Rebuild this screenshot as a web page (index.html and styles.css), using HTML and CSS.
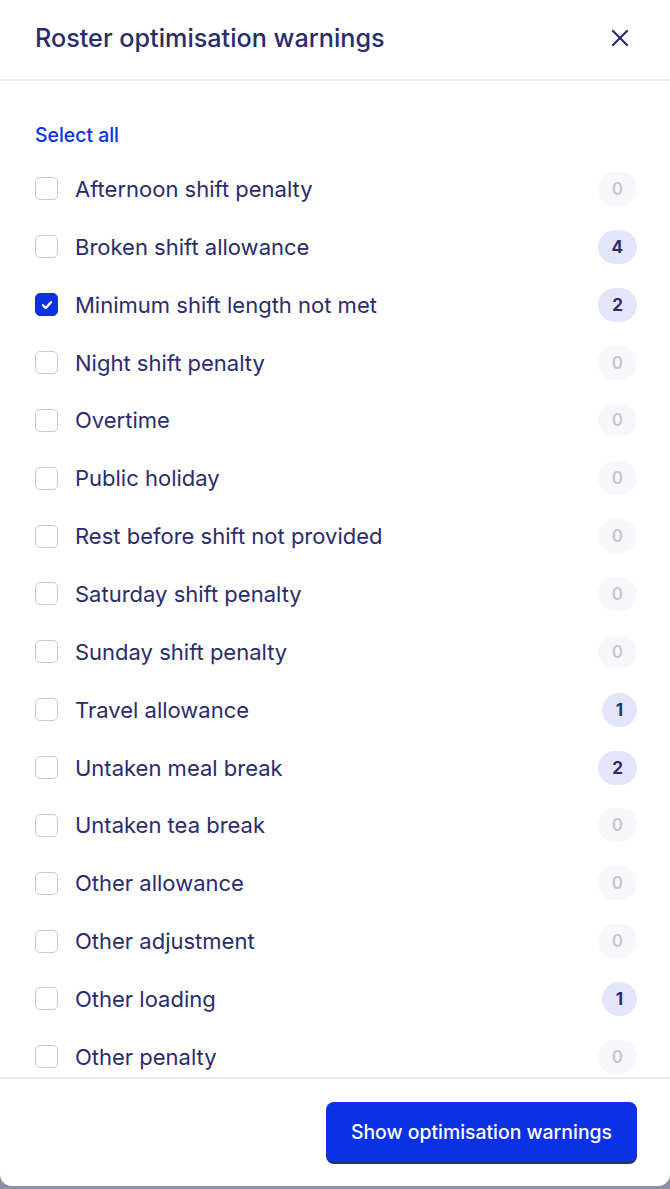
FILE: index.html
```html
<!DOCTYPE html>
<html>
<head>
<meta charset="utf-8">
<link rel="stylesheet" href="styles.css">
</head>
<body>
<div class="modal">
  <header class="header">
    <h1 class="title">Roster optimisation warnings</h1>
    <button class="close" aria-label="Close">
      <svg width="18" height="18" viewBox="0 0 18 18"><path d="M2 2L16 16M16 2L2 16" stroke="#2b2c6a" stroke-width="2.2" stroke-linecap="round" fill="none"/></svg>
    </button>
  </header>
  <div class="body">
    <a class="select-all">Select all</a>
    <ul class="list">
      <li class="row"><span class="box"></span><span class="label">Afternoon shift penalty</span><span class="badge zero">0</span></li>
      <li class="row"><span class="box"></span><span class="label">Broken shift allowance</span><span class="badge">4</span></li>
      <li class="row"><span class="box checked"><svg width="14" height="14" viewBox="0 0 14 14"><path d="M3 7.3L5.8 10L11 4.2" stroke="#fff" stroke-width="2.4" stroke-linecap="round" stroke-linejoin="round" fill="none"/></svg></span><span class="label">Minimum shift length not met</span><span class="badge">2</span></li>
      <li class="row"><span class="box"></span><span class="label">Night shift penalty</span><span class="badge zero">0</span></li>
      <li class="row"><span class="box"></span><span class="label">Overtime</span><span class="badge zero">0</span></li>
      <li class="row"><span class="box"></span><span class="label">Public holiday</span><span class="badge zero">0</span></li>
      <li class="row"><span class="box"></span><span class="label">Rest before shift not provided</span><span class="badge zero">0</span></li>
      <li class="row"><span class="box"></span><span class="label">Saturday shift penalty</span><span class="badge zero">0</span></li>
      <li class="row"><span class="box"></span><span class="label">Sunday shift penalty</span><span class="badge zero">0</span></li>
      <li class="row"><span class="box"></span><span class="label">Travel allowance</span><span class="badge">1</span></li>
      <li class="row"><span class="box"></span><span class="label">Untaken meal break</span><span class="badge">2</span></li>
      <li class="row"><span class="box"></span><span class="label">Untaken tea break</span><span class="badge zero">0</span></li>
      <li class="row"><span class="box"></span><span class="label">Other allowance</span><span class="badge zero">0</span></li>
      <li class="row"><span class="box"></span><span class="label">Other adjustment</span><span class="badge zero">0</span></li>
      <li class="row"><span class="box"></span><span class="label">Other loading</span><span class="badge">1</span></li>
      <li class="row"><span class="box"></span><span class="label">Other penalty</span><span class="badge zero">0</span></li>
    </ul>
  </div>
  <footer class="footer">
    <button class="primary">Show optimisation warnings</button>
  </footer>
</div>
</body>
</html>
```
FILE: styles.css
```css
* { box-sizing: border-box; }
html, body { margin: 0; padding: 0; }
body {
  background: #8e8fa6;
  font-family: "Inter", "Noto Sans", sans-serif;
  color: #2b2c6a;
  height: 1189px;
  overflow: hidden;
}
.modal {
  width: 670px;
  height: 1186px;
  background: #fff;
  border-radius: 0 0 12px 12px;
  display: flex;
  flex-direction: column;
  overflow: hidden;
}
.header {
  height: 81px;
  flex: none;
  display: flex;
  align-items: center;
  justify-content: space-between;
  padding: 0 40px 4px 35px;
  border-bottom: 2px solid #ebebf3;
}
.title {
  margin: 0;
  font-size: 25.2px;
  font-weight: 500;
  color: #2b2c6a;
}
.close {
  border: none;
  background: none;
  padding: 0;
  width: 20px;
  height: 20px;
  display: flex;
  align-items: center;
  justify-content: center;
}
.body {
  flex: 1;
  overflow: hidden;
  padding: 42px 33px 0 35px;
}
.select-all {
  display: block;
  height: 24px;
  line-height: 24px;
  font-size: 19.4px;
  font-weight: 500;
  color: #0b32e6;
  margin-bottom: 13px;
}
.list {
  list-style: none;
  margin: 0;
  padding: 0;
}
.row {
  height: 57.87px;
  display: flex;
  align-items: center;
}
.box {
  width: 23px;
  height: 23px;
  border: 1.5px solid #c9c9dc;
  border-radius: 5px;
  flex: none;
  display: flex;
  align-items: center;
  justify-content: center;
}
.box.checked {
  background: #0a31e4;
  border-color: #0a31e4;
}
.label {
  flex: 1;
  margin-left: 17px;
  font-size: 22px;
  color: #2b2c6a;
}
.badge {
  min-width: 34px;
  height: 34px;
  padding: 0 14px;
  border-radius: 17px;
  background: #e3e6fa;
  color: #2b2c6a;
  font-size: 17px;
  font-weight: 700;
  display: flex;
  align-items: center;
  justify-content: center;
}
.badge.zero {
  background: #f7f7fc;
  color: #c6c6d6;
  font-weight: 600;
}
.footer {
  height: 109px;
  flex: none;
  border-top: 2px solid #ebebf3;
  display: flex;
  justify-content: flex-end;
  align-items: flex-start;
  padding: 23px 33px 0 0;
}
.primary {
  height: 60px;
  padding: 0 25px;
  border: none;
  border-radius: 8px;
  background: #0a31e4;
  color: #fff;
  font-family: inherit;
  font-size: 19.4px;
  font-weight: 500;
  box-shadow: 0 2px 0 #2b2c6a;
}
```
